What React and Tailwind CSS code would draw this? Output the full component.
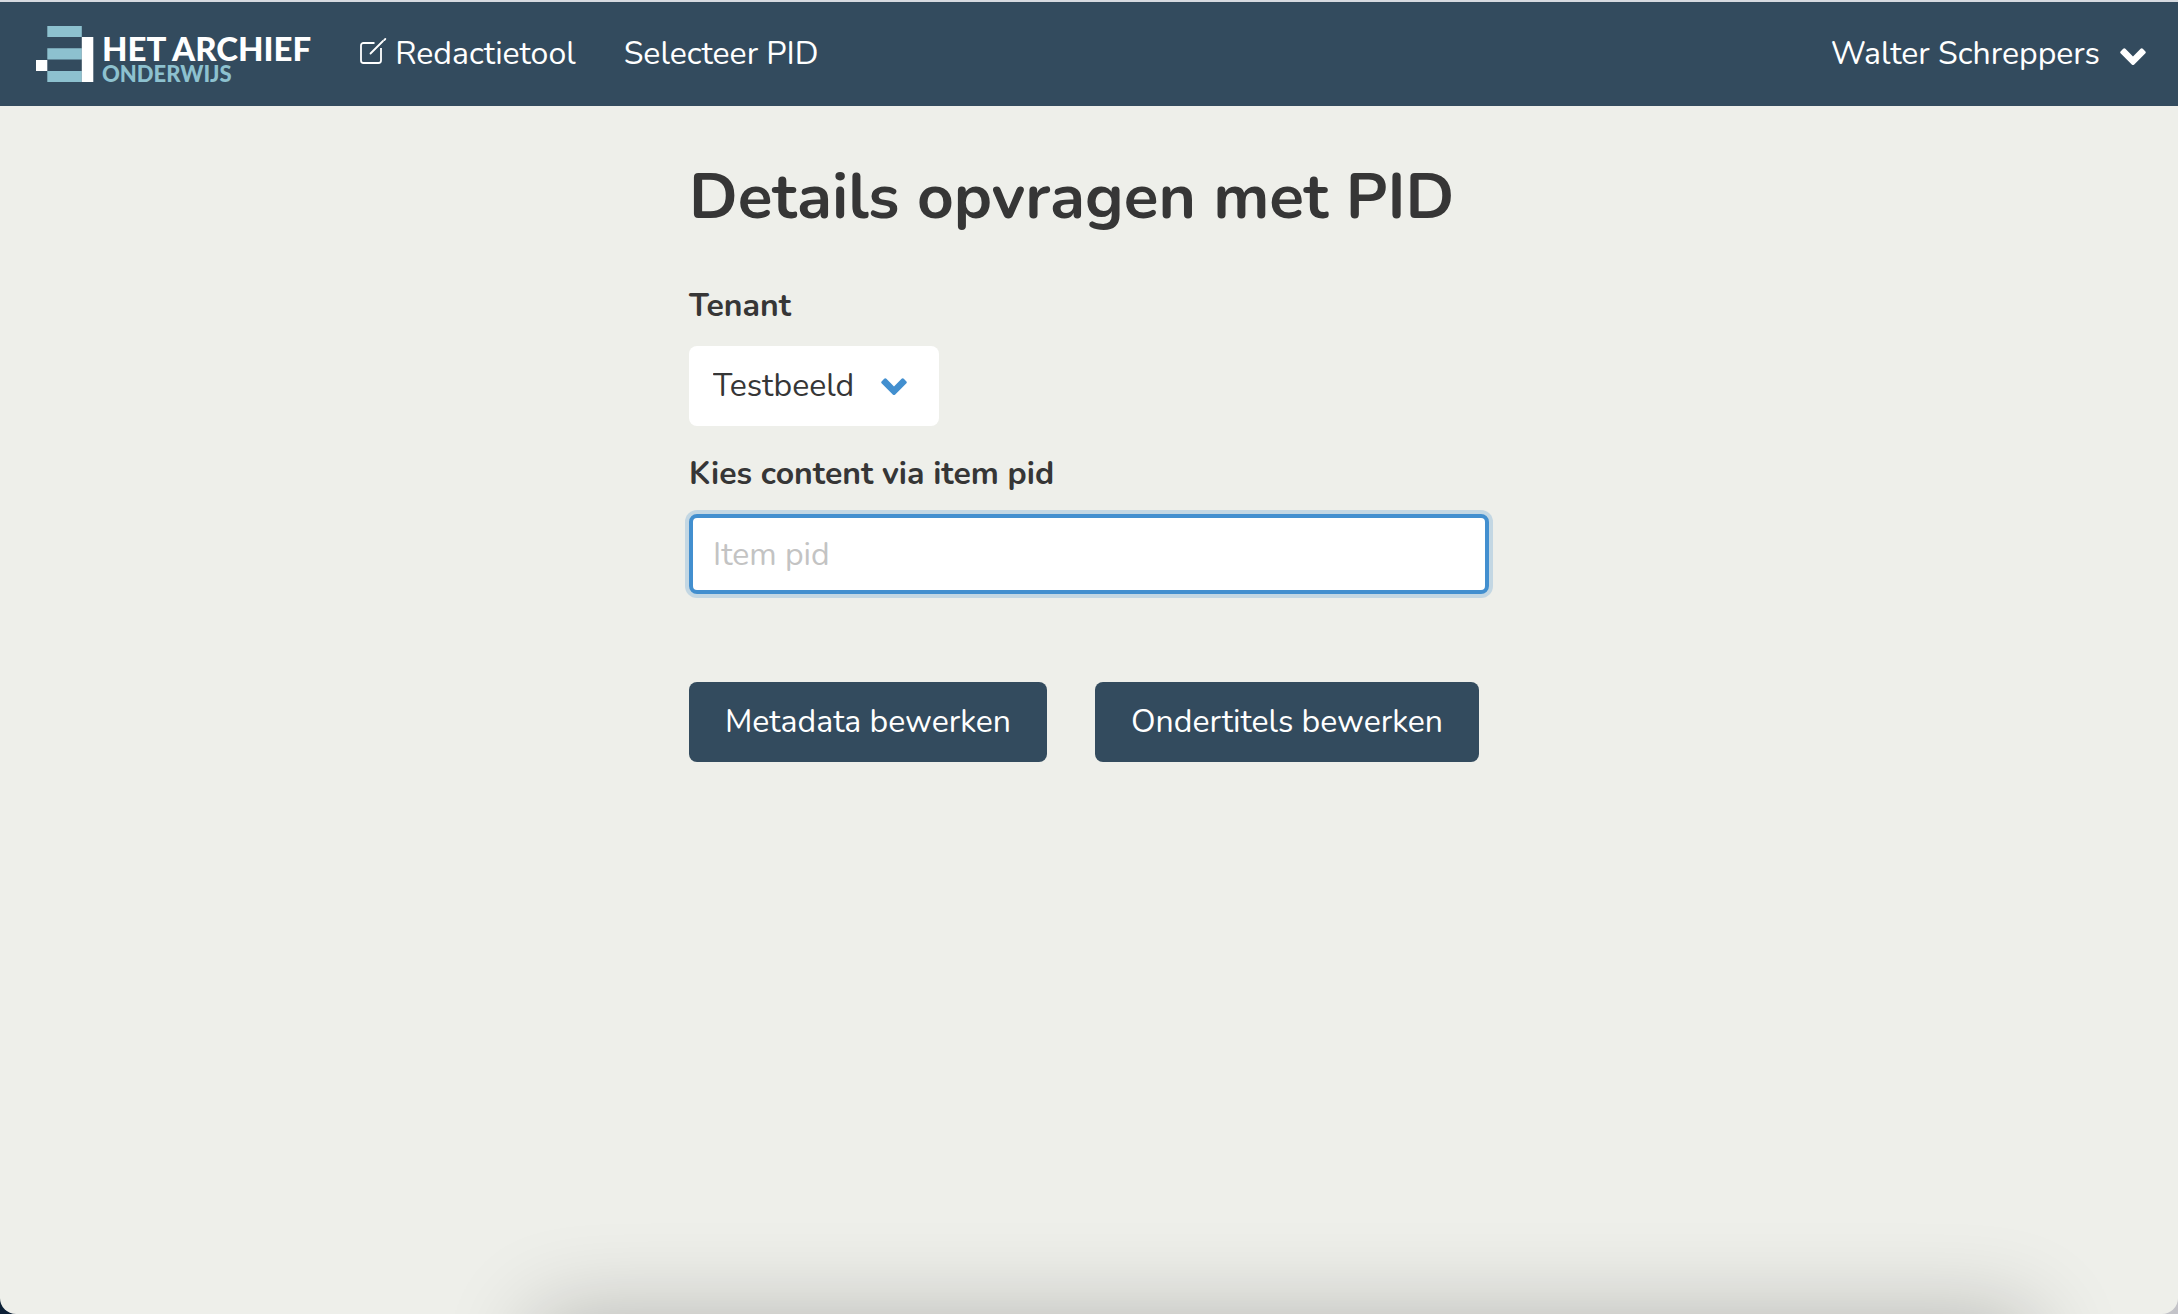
import React from "react";

function LogoMark() {
  return (
    <svg viewBox="0 0 58 56" className="h-14 w-[58px] shrink-0" aria-hidden="true">
      <path fill="#8dc1cf" d="M11.300 0H45.800v11H11.300zM11.300 22.300H45.800V33.500H11.300zM11.300 45H45.800v11H11.300z" />
      <path fill="#fff" d="M45.800 11h11.500v45H45.800zM0 34h11.300v11H0z" />
    </svg>
  );
}

function EditIcon() {
  return (
    <svg viewBox="0 0 28 28" className="mb-1 size-7 shrink-0" fill="none" stroke="#fff" strokeWidth="1.800" aria-hidden="true">
      <path d="M15.500 5H4.500A2.500 2.500 0 0 0 2 7.500v15A2.500 2.500 0 0 0 4.500 25h15a2.500 2.500 0 0 0 2.500-2.500V10" strokeLinecap="butt" />
      <path d="M11.500 15.500 24 3" strokeLinecap="round" />
      <path d="M25.300 2 26.300 1" strokeLinecap="round" />
    </svg>
  );
}

function Chevron({ className }) {
  return (
    <svg viewBox="0 0 26 17" className={className} fill="currentColor" aria-hidden="true">
      <path d="M11.500 16.300.8 5.600a1.600 1.600 0 0 1 0-2.300L3.200.8a1.500 1.500 0 0 1 2.200 0L13 8.400 20.600.8a1.500 1.500 0 0 1 2.200 0l2.400 2.500a1.600 1.600 0 0 1 0 2.300L14.500 16.300a2.100 2.100 0 0 1-3 0z" />
    </svg>
  );
}

export default function App() {
  return (
    <div className="min-h-screen bg-linear-to-r from-[#0c2036] from-50% to-[#c3c3c8] to-50% font-['Nunito','Lato',sans-serif] text-[32px] leading-12 text-[#363636]">
      <div className="relative flex min-h-screen flex-col overflow-hidden rounded-b-2xl bg-[#eeefea]">
        <header className="flex h-[106px] items-center border-t-2 border-[#d6dae0] bg-[#334b5e] pr-8 pl-9 text-white">
          <a href="#" className="flex shrink-0 items-center gap-2 font-['Lato',sans-serif] font-black whitespace-nowrap">
            <LogoMark />
            <span className="flex flex-col pt-3">
              <span className="text-[33px] leading-7">HET ARCHIEF</span>
              <span className="text-[22px] leading-6 text-[#8dc1cf]">ONDERWIJS</span>
            </span>
          </a>
          <nav className="ml-12 flex items-center gap-12 whitespace-nowrap">
            <a href="#" className="flex items-center gap-2">
              <EditIcon />
              Redactietool
            </a>
            <a href="#">Selecteer PID</a>
          </nav>
          <button type="button" className="ml-auto flex items-center gap-5 whitespace-nowrap">
            Walter Schreppers
            <Chevron className="mt-1 h-[17px] w-[26px]" />
          </button>
        </header>

        <main className="mx-auto w-full max-w-[800px] pt-14">
          <h1 className="mb-[50px] text-[64px] leading-[70px] font-bold">Details opvragen met PID</h1>
          <form onSubmit={(e) => e.preventDefault()}>
            <label htmlFor="tenant" className="mb-4 block font-bold">Tenant</label>
            <div className="relative w-fit">
              <select id="tenant" className="h-20 w-[250px] appearance-none rounded-lg bg-white pr-16 pl-6">
                <option>Testbeeld</option>
              </select>
              <Chevron className="pointer-events-none absolute top-8 right-8 h-[17px] w-[26px] text-[#428fcf]" />
            </div>
            <label htmlFor="pid" className="mt-6 mb-4 block font-bold">Kies content via item pid</label>
            <input
              id="pid"
              type="text"
              placeholder="Item pid"
              className="block h-20 w-full rounded-lg border-4 border-[#428fcf] bg-white px-5 ring-4 ring-[#428fcf]/25 outline-none placeholder:text-[#c3c3c3]"
            />
            <div className="mt-22 flex flex-wrap gap-12">
              <button type="submit" className="h-20 rounded-lg bg-[#334b5e] px-9 text-white">Metadata bewerken</button>
              <button type="button" className="h-20 rounded-lg bg-[#334b5e] px-9 text-white">Ondertitels bewerken</button>
            </div>
          </form>
        </main>

        <div className="pointer-events-none absolute right-[145px] -bottom-40 left-[535px] h-40 rounded-2xl shadow-[0_0_90px_rgba(0,0,0,0.24)]" />
      </div>
    </div>
  );
}
